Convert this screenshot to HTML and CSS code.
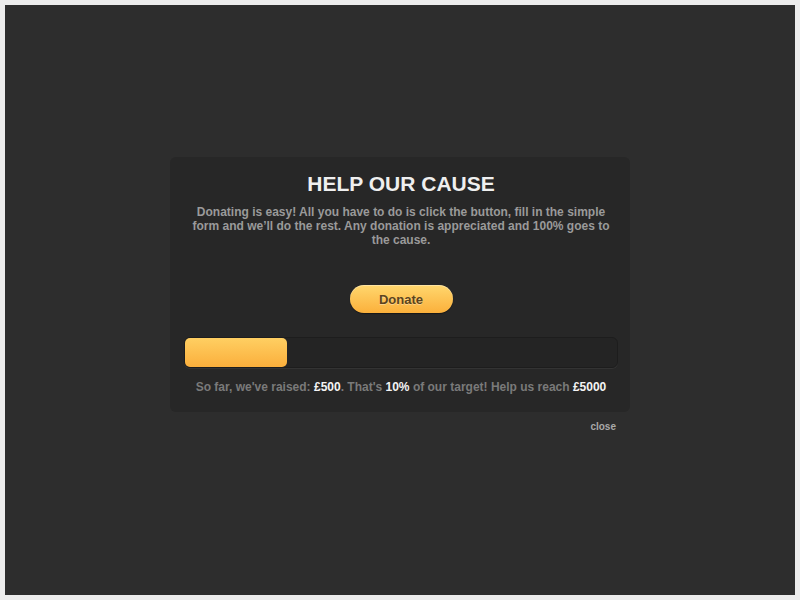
FILE: index.html
```html
<!DOCTYPE html>
<html>
<head>
<meta charset="utf-8">
<link rel="stylesheet" href="styles.css">
</head>
<body>
<div class="frame">
  <div class="wrap">
    <div class="panel">
      <h1 class="title">HELP OUR CAUSE</h1>
      <p class="intro">Donating is easy! All you have to do is click the button, fill in the simple form and we’ll do the rest. Any donation is appreciated and 100% goes to the cause.</p>
      <button class="donate">Donate</button>
      <div class="track"><div class="fill" style="width:102px"></div></div>
      <p class="status">So far, we've raised: <b>£500</b>. That's <b>10%</b> of our target! Help us reach <b>£5000</b></p>
    </div>
    <div class="closerow"><span class="close">close</span></div>
  </div>
</div>
</body>
</html>
```
FILE: styles.css
```css
html, body { margin: 0; padding: 0; background: #ececec; }
body { font-family: "Liberation Sans", Arial, sans-serif; }
.frame {
  margin: 5px;
  height: 590px;
  background: #2d2d2d;
  overflow: hidden;
}
.wrap {
  width: 460px;
  margin: 152px auto 0;
}
.panel {
  background: #272727;
  border-radius: 6px;
  padding: 15px 12px 18px 14px;
  display: flex;
  flex-direction: column;
  align-items: center;
}
.title {
  margin: 0;
  font-size: 21px;
  line-height: 24px;
  font-weight: bold;
  color: #efefef;
}
.intro {
  margin: 9px 6px 0 6px;
  font-size: 12px;
  line-height: 14px;
  font-weight: bold;
  color: #9a9a9a;
  text-align: center;
}
.donate {
  margin-top: 38px;
  width: 103px;
  height: 28px;
  border: none;
  border-radius: 14px;
  background: linear-gradient(#ffd76e, #fbb03b);
  box-shadow: 0 1px 1px rgba(0,0,0,0.4), inset 0 1px 0 rgba(255,255,255,0.35);
  font-family: "Liberation Sans", Arial, sans-serif;
  font-size: 13px;
  font-weight: bold;
  color: #5b4420;
  text-shadow: 0 1px 0 rgba(255,255,255,0.35);
  padding: 0;
}
.track {
  margin-top: 24px;
  align-self: stretch;
  height: 29px;
  background: #242424;
  border: 1px solid #1d1d1d;
  border-radius: 6px;
  box-shadow: 0 1px 0 #333;
}
.fill {
  height: 29px;
  border-radius: 5px;
  background: linear-gradient(#ffcf62, #fbaf3c);
}
.status {
  margin: 12px 0 0 0;
  font-size: 12px;
  line-height: 14px;
  font-weight: bold;
  color: #7a7a7a;
  text-align: center;
}
.status b { color: #f4f4f4; }
.closerow {
  display: flex;
  justify-content: flex-end;
  padding: 9px 14px 0 0;
}
.close {
  font-size: 10px;
  line-height: 12px;
  font-weight: bold;
  color: #a8a8a8;
}
```
